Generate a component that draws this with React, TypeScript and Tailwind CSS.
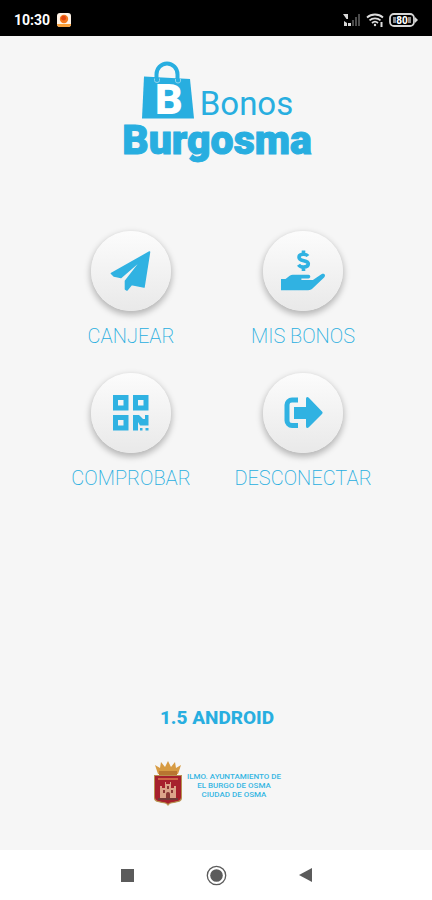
import type { ReactNode } from 'react'

function StatusBar() {
  return (
    <div className="flex h-9 items-center bg-black px-[14px] pt-[3px] text-white">
      <span className="text-[14px] font-bold leading-4">10:30</span>
      <svg className="ml-[7px]" width="14" height="14" viewBox="0 0 14 14" aria-hidden="true">
        <rect width="14" height="14" rx="3" fill="#fff3e6" />
        <path d="M0 11h14a3 3 0 0 1-3 3H3a3 3 0 0 1-3-3z" fill="#f9a13a" />
        <circle cx="7" cy="6" r="4.2" fill="#f47a1f" />
        <circle cx="6.6" cy="5.2" r="2.4" fill="#e2450f" />
      </svg>
      <div className="ml-auto flex items-center gap-[5px]">
        {/* Mobile signal */}
        <svg width="18" height="14" viewBox="0 0 18 14" aria-hidden="true">
          <path d="M0 1h5v5H3.500zM1 13V8l3 2v3zM5 13v-3h3v3z" fill="#d8d8d8" />
          <path d="M9 13V7h2v6zM12 13V4h2v9zM15 13V1h2v12z" fill="#4b4b4b" />
        </svg>
        {/* Wi-Fi */}
        <svg width="18" height="14" viewBox="0 0 18 14" fill="none" stroke="#dedede" strokeWidth="1.800" aria-hidden="true">
          <path d="M1 4.500c4.500-4 11.500-4 16 0M3.500 7.300c3-2.700 8-2.700 11 0M6 10c1.700-1.500 4.300-1.500 6 0" />
          <circle cx="9" cy="12" r="1.200" fill="#dedede" stroke="none" />
          <path d="M15.500 9v5" strokeWidth="2" />
        </svg>
        {/* Battery */}
        <svg width="29" height="14" viewBox="0 0 29 14" aria-hidden="true">
          <rect x="1" y="1" width="24" height="12" rx="4" fill="none" stroke="#d8d8d8" strokeWidth="1.800" />
          <path d="M26 4l3 3-3 3z" fill="#d8d8d8" />
          <rect x="4" y="4" width="3" height="6" fill="#8a8a8a" />
          <rect x="19" y="4" width="3" height="6" fill="#8a8a8a" />
          <text x="13" y="10.500" textAnchor="middle" fontSize="10" fontWeight="800" fill="#fff">80</text>
        </svg>
      </div>
    </div>
  )
}

function Logo() {
  return (
    <h1 className="flex flex-col items-center text-[#28aee0]">
      <span className="flex items-end gap-[5px]">
        <svg className="overflow-visible" width="54" height="58" viewBox="0 0 54 58" aria-hidden="true">
          <path d="M15.500 19V13.500a10.500 11 0 0 1 21 0V19" fill="none" stroke="#28aee0" strokeWidth="4" />
          <path d="M3 15.500L49 18l4 39.500H1z" fill="#28aee0" />
          <path d="M13.500 17.500v2a2.500 2 0 0 0 5 0v-2M34.500 18v2a2.500 2 0 0 0 5 0v-2" fill="none" stroke="#8fd4ee" />
          <text x="28" y="53" textAnchor="middle" fontSize="43" fontWeight="900" fill="#fff">B</text>
        </svg>
        <span className="text-[33px] font-normal leading-[30px]">Bonos</span>
      </span>
      <span className="text-[41px] font-black leading-[42px] [-webkit-text-stroke:1px_#28aee0]">Burgosma</span>
    </h1>
  )
}

interface ActionProps {
  label: string
  children: ReactNode
}

function Action({ label, children }: ActionProps) {
  return (
    <button type="button" className="flex flex-col items-center gap-3">
      <span className="flex size-20 items-center justify-center rounded-full bg-linear-to-b from-[#fcfcfc] to-[#e9e9e9] shadow-[0_3px_6px_1px_rgba(0,0,0,0.26)]">
        <svg width="48" height="48" viewBox="0 0 48 48" fill="#30b2e2" aria-hidden="true">
          {children}
        </svg>
      </span>
      <span className="whitespace-nowrap text-[20px] font-extralight leading-[26px] text-[#28aee0]">{label}</span>
    </button>
  )
}

function Crest() {
  return (
    <svg width="30" height="45" viewBox="0 0 30 45" aria-hidden="true">
      <path d="M5 13L2 4l5 3 1-6 4 5 3-6 3 6 4-5 1 6 5-3-3 9z" fill="#d79b43" />
      <path d="M6 10h18v4H6z" fill="#b87530" />
      <path d="M1 14h28v23c0 4-4 4-8 5-3 0-5 1-6 3-1-2-3-3-6-3-4-1-8-1-8-5z" fill="#b89150" />
      <path d="M2 15h26v21c0 4-4 4-8 5-3 0-4 1-5 2-1-1-2-2-5-2-4-1-8-1-8-5z" fill="#a6202d" />
      <path d="M5 17h20v2H5z" fill="#cf6645" />
      <path d="M7 37V25h2v2h3v-6h1v2h4v-2h1v6h3v-2h2v12z" fill="#dca58a" />
      <path d="M13 37v-4a2 2 0 0 1 4 0v4zM10 29h2v3h-2zM18 29h2v3h-2zM14 25h2v3h-2z" fill="#8a3835" />
      <path d="M5 37h20v2H5z" fill="#713b38" />
    </svg>
  )
}

function NavBar() {
  return (
    <nav className="flex h-[50px] items-center justify-center gap-[68px] bg-white">
      <button type="button" aria-label="Recientes" className="flex size-[21px] items-center justify-center">
        <span className="size-[13px] bg-[#5b5b5b]" />
      </button>
      <button type="button" aria-label="Inicio" className="flex size-[21px] items-center justify-center">
        <svg width="21" height="21" viewBox="0 0 21 21" aria-hidden="true">
          <circle cx="10.500" cy="10.500" r="9.200" fill="none" stroke="#5b5b5b" strokeWidth="1.300" />
          <circle cx="10.500" cy="10.500" r="6.300" fill="#5b5b5b" />
        </svg>
      </button>
      <button type="button" aria-label="Atrás" className="flex size-[21px] items-center justify-center">
        <svg width="13" height="14" viewBox="0 0 13 14" aria-hidden="true">
          <path d="M13 0v14L0 7z" fill="#5b5b5b" />
        </svg>
      </button>
    </nav>
  )
}

export default function App() {
  return (
    <div className="flex min-h-screen flex-col bg-[#f6f6f6] font-['Roboto',sans-serif]">
      <StatusBar />
      <main className="flex flex-1 flex-col items-center pb-11 pl-[2px] pt-[25px]">
        <Logo />
        <div className="mt-[70px] grid grid-cols-[172px_172px] justify-center gap-y-6">
          <Action label="CANJEAR">
            <path
              d="M42.500 5L4.500 26.500l2.500 2.500 7 1.500L36 11.500 18.500 34v8l1.500 1 4.500-5.500L37 40z"
              stroke="#30b2e2"
              strokeWidth="1.600"
              strokeLinejoin="round"
            />
          </Action>
          <Action label="MIS BONOS">
            <path
              d="M29 9c-1-1.300-2.700-1.800-4.500-1.800-2.700 0-4.500 1-4.500 3 0 4.800 9.300 2.200 9.300 6.600 0 2.200-2 3.200-4.700 3.200-2.200 0-4.100-.8-5.100-2.300M24.500 3.500v3.500M24.500 20v4"
              fill="none"
              stroke="#30b2e2"
              strokeWidth="3.600"
            />
            <path d="M2 32h4.500l4.200-3.200c1-.7 2-1 3.200-1h15.500c2.500 0 2.600 3.600 0 3.600h-7v1.600h11.500l8.500-5.700c2.700-1.500 5 1 2.700 3.200L33.500 41.500c-1.300 1.200-2.500 1.700-4.300 1.700H2z" />
          </Action>
          <Action label="COMPROBAR">
            <path
              fillRule="evenodd"
              d="M6 6h15.500v15.500H6zM11 11v5.500h5.500V11zM26 6h15.500v15.500H26zM31 11v5.500h5.500V11zM6 26h15.500v15.500H6zM11 31v5.500h5.500V31zM26 26h6l4 4h2v-4h3.500v10.500H33l-2-3.500v8.500h-5zM33 39h2.500v2.500H33zM38.500 39h3v2.500h-3z"
            />
          </Action>
          <Action label="DESCONECTAR">
            <path d="M19 8.500h-6A7.500 7.500 0 0 0 5.500 16v15.500A7.500 7.500 0 0 0 13 39h6v-5h-6c-1.700 0-2.500-.8-2.500-2.500V16c0-1.700.8-2.500 2.500-2.500h6z" />
            <path d="M15 18h12V10c0-2 1.300-2.700 2.800-1.300L43 22.500c.8.8.8 1.600 0 2.400L29.800 38.300c-1.500 1.400-2.800.7-2.800-1.300V30H15z" />
          </Action>
        </div>

        <footer className="mt-auto flex flex-col items-center gap-[31px]">
          <p className="text-[19px] font-extrabold leading-6 text-[#28aee0]">1.5 ANDROID</p>
          <div className="flex items-center gap-1">
            <Crest />
            <p className="pt-1 text-center text-[8px] font-medium leading-[9px] text-[#36b6e3]">
              ILMO. AYUNTAMIENTO DE
              <br />
              EL BURGO DE OSMA
              <br />
              CIUDAD DE OSMA
            </p>
          </div>
        </footer>
      </main>
      <NavBar />
    </div>
  )
}
